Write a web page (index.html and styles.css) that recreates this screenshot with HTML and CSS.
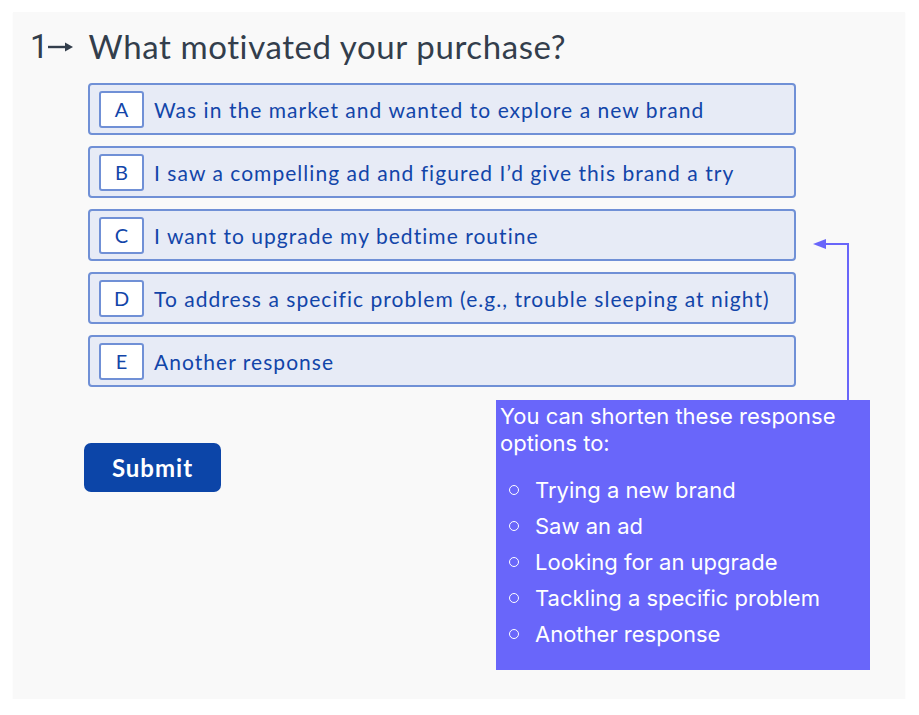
FILE: index.html
```html
<!DOCTYPE html>
<html lang="en">
<head>
<meta charset="utf-8">
<title>Question</title>
<link rel="stylesheet" href="styles.css">
</head>
<body>
<div class="card">
  <h1 class="question">
    <span class="qnum">1</span>
    <svg class="qarrow" width="26" height="12" viewBox="0 0 26 12"><path d="M0 6H20" stroke="#333e4c" stroke-width="2.4"/><path d="M17 1.5L25 6L17 10.5Z" fill="#333e4c"/></svg>
    <span class="qtext">What motivated your purchase?</span>
  </h1>
  <div class="options">
    <div class="option"><span class="key">A</span><span class="label">Was in the market and wanted to explore a new brand</span></div>
    <div class="option"><span class="key">B</span><span class="label">I saw a compelling ad and figured I’d give this brand a try</span></div>
    <div class="option"><span class="key">C</span><span class="label">I want to upgrade my bedtime routine</span></div>
    <div class="option"><span class="key">D</span><span class="label">To address a specific problem (e.g., trouble sleeping at night)</span></div>
    <div class="option"><span class="key">E</span><span class="label">Another response</span></div>
  </div>
  <button class="submit">Submit</button>

  <svg class="connector" width="50" height="160" viewBox="0 0 50 160">
    <path d="M35 160V4H10" fill="none" stroke="#6966fa" stroke-width="2"/>
    <path d="M0 4L13 -1V9Z" fill="#6966fa"/>
  </svg>
  <div class="note">
    <p class="note-title">You can shorten these response options to:</p>
    <ul class="note-list">
      <li>Trying a new brand</li>
      <li>Saw an ad</li>
      <li>Looking for an upgrade</li>
      <li>Tackling a specific problem</li>
      <li>Another response</li>
    </ul>
  </div>
</div>
</body>
</html>
```
FILE: styles.css
```css
html, body {
  margin: 0;
  padding: 0;
  background: #ffffff;
}

.card {
  position: relative;
  box-sizing: border-box;
  margin: 12px 14px 0 13px;
  height: 687px;
  background: #f9f9f9;
  box-shadow: 0 1px 1px rgba(0, 0, 0, 0.06);
  padding: 14px 0 0 17px;
  font-family: "Lato", "Liberation Sans", sans-serif;
}

.question {
  display: flex;
  align-items: center;
  margin: 0;
  height: 40px;
  font-weight: 400;
  font-size: 33px;
  letter-spacing: 0.6px;
  color: #333e4c;
}

.qnum {
  font-family: "Roboto", "Liberation Sans", sans-serif;
  font-weight: 400;
  letter-spacing: 0;
}

.qarrow {
  margin: 2px 15px 0 -1px;
}

.options {
  display: flex;
  flex-direction: column;
  gap: 11px;
  width: 708px;
  margin: 17px 0 0 58px;
}

.option {
  display: flex;
  align-items: center;
  gap: 10px;
  box-sizing: border-box;
  height: 52px;
  padding-left: 9px;
  border: 2px solid #7090d6;
  border-radius: 4px;
  background: #e7ebf6;
  color: #1245a9;
  font-size: 21px;
  letter-spacing: 1.04px;
}

.key {
  display: flex;
  align-items: center;
  justify-content: center;
  box-sizing: border-box;
  width: 45px;
  height: 37px;
  border: 2px solid #7090d6;
  border-radius: 3px;
  background: #ffffff;
  font-size: 20px;
  letter-spacing: 0;
}

.submit {
  display: block;
  margin: 56px 0 0 54px;
  width: 137px;
  height: 49px;
  border: none;
  border-radius: 7px;
  background: #0c45a8;
  color: #ffffff;
  font-family: "Lato", "Liberation Sans", sans-serif;
  font-weight: 700;
  font-size: 24px;
  letter-spacing: 1px;
  padding: 0;
}

.connector {
  position: absolute;
  left: 800px;
  top: 228px;
  overflow: visible;
}

.note {
  position: absolute;
  left: 483px;
  top: 388px;
  box-sizing: border-box;
  width: 374px;
  height: 270px;
  padding: 3px 4px 0 4px;
  background: #6966fa;
  color: #ffffff;
  font-family: "Inter", "Liberation Sans", sans-serif;
  font-size: 22px;
}

.note-title {
  margin: 0;
  line-height: 27px;
}

.note-list {
  list-style: none;
  margin: 15px 0 0 0;
  padding: 0 0 0 9px;
}

.note-list li {
  display: flex;
  align-items: center;
  gap: 16px;
  height: 36px;
}

.note-list li::before {
  content: "";
  box-sizing: border-box;
  width: 10px;
  height: 10px;
  border: 1.8px solid #ffffff;
  border-radius: 50%;
  flex: none;
}
```
